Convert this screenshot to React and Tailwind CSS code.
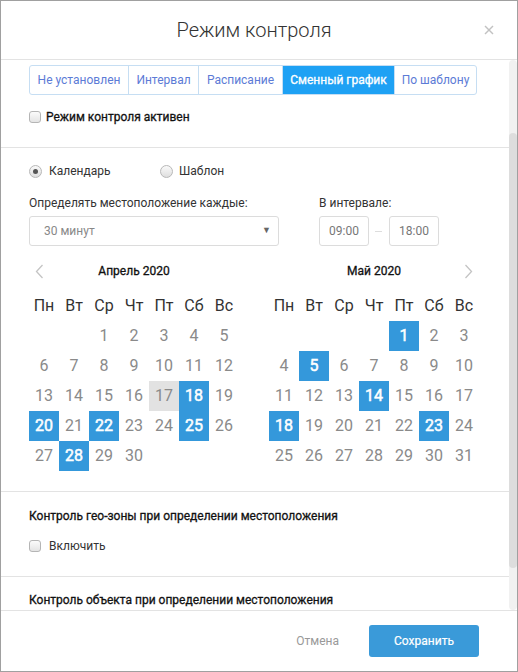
import React from "react";

const tabs = [
  { label: "Не установлен", w: "w-[98px]" },
  { label: "Интервал", w: "w-[70px]" },
  { label: "Расписание", w: "w-[84px]" },
  { label: "Сменный график", w: "w-[112px]", active: true },
  { label: "По шаблону", w: "w-[82px]" },
];

const weekdays = ["Пн", "Вт", "Ср", "Чт", "Пт", "Сб", "Вс"];

function Checkbox() {
  return (
    <span className="w-[12px] h-[12px] rounded-[3px] border border-[#b5b5b5] bg-gradient-to-b from-[#fbfbfb] to-[#e4e4e4] shrink-0" />
  );
}

function Radio({ checked }) {
  return (
    <span className="w-[13px] h-[13px] rounded-full border border-[#b8b8b8] bg-gradient-to-b from-[#fafafa] to-[#dedede] flex items-center justify-center shrink-0">
      {checked && <span className="w-[5px] h-[5px] rounded-full bg-[#555]" />}
    </span>
  );
}

function Chevron({ dir }) {
  return (
    <svg width="9" height="15" viewBox="0 0 9 15" className="shrink-0">
      {dir === "left" ? (
        <polyline points="7.5,1 1.5,7.5 7.5,14" fill="none" stroke="#c4c4c4" strokeWidth="1.3" />
      ) : (
        <polyline points="1.5,1 7.5,7.5 1.5,14" fill="none" stroke="#c4c4c4" strokeWidth="1.3" />
      )}
    </svg>
  );
}

function Month({ title, offset, days, marked, today, nav }) {
  const cells = [];
  for (let i = 0; i < offset; i++) cells.push(null);
  for (let d = 1; d <= days; d++) cells.push(d);
  return (
    <div className="w-[210px] flex flex-col">
      <div className="h-[20px] flex items-center justify-between">
        <div className="w-[20px] flex justify-center">{nav === "left" && <Chevron dir="left" />}</div>
        <div className="text-[12px] text-[#111] leading-[16px] [-webkit-text-stroke:0.3px_#111]">{title}</div>
        <div className="w-[20px] flex justify-center">{nav === "right" && <Chevron dir="right" />}</div>
      </div>
      <div className="grid grid-cols-7 mt-[10px]">
        {weekdays.map((w) => (
          <div key={w} className="h-[30px] flex items-center justify-center text-[16px] text-[#333]">
            {w}
          </div>
        ))}
        {cells.map((d, i) => {
          const isMarked = d && marked.includes(d);
          const isToday = d === today;
          return (
            <div
              key={i}
              className={
                "h-[30px] flex items-center justify-center text-[16px] " +
                (isMarked
                  ? "bg-[#3498db] text-white [-webkit-text-stroke:0.5px_#fff]"
                  : isToday
                  ? "bg-[#e2e2e2] text-[#8a8a8a]"
                  : "text-[#8a8a8a]")
              }
            >
              {d || ""}
            </div>
          );
        })}
      </div>
    </div>
  );
}

export default function App() {
  return (
    <div className="w-[518px] h-[672px] border border-[#a0a0a0] bg-white flex flex-col font-[Roboto,sans-serif] overflow-hidden">
      {/* Header */}
      <div className="h-[59px] shrink-0 border-b border-[#e3e3e3] relative flex items-center justify-center pr-[10px]">
        <div className="text-[20px] font-light text-[#333] leading-[26px]">Режим контроля</div>
        <svg width="10" height="10" viewBox="0 0 10 10" className="absolute right-[23px] top-[24px]">
          <line x1="1" y1="1" x2="9" y2="9" stroke="#c2c2c2" strokeWidth="1.4" />
          <line x1="9" y1="1" x2="1" y2="9" stroke="#c2c2c2" strokeWidth="1.4" />
        </svg>
      </div>

      {/* Body */}
      <div className="h-[550px] shrink-0 flex">
        <div className="flex-1 overflow-hidden flex flex-col">
          {/* Section 1 */}
          <div className="h-[88px] shrink-0 border-b border-[#e3e3e3] pl-[28px] pt-[5px]">
            <div className="flex h-[30px] border border-[#c6def3] rounded-[3px] w-fit overflow-hidden">
              {tabs.map((t, i) => (
                <div
                  key={t.label}
                  className={
                    t.w +
                    " h-full flex items-center justify-center text-[12px] " +
                    (i > 0 ? "border-l border-[#c6def3] " : "") +
                    (t.active ? "bg-[#1ea1f4] text-white [-webkit-text-stroke:0.3px_#fff]" : "text-[#5c7bd6]")
                  }
                >
                  {t.label}
                </div>
              ))}
            </div>
            <div className="mt-[15px] h-[14px] flex items-center gap-[5px]">
              <Checkbox />
              <span className="text-[12px] text-[#111] leading-[14px] [-webkit-text-stroke:0.3px_#111]">Режим контроля активен</span>
            </div>
          </div>

          {/* Section 2 */}
          <div className="h-[344px] shrink-0 border-b border-[#e3e3e3] pl-[28px] pt-[15px]">
            <div className="h-[16px] flex items-center">
              <div className="flex items-center gap-[7px] w-[131px]">
                <Radio checked />
                <span className="text-[12px] text-[#333]">Календарь</span>
              </div>
              <div className="flex items-center gap-[6px]">
                <Radio />
                <span className="text-[12px] text-[#333]">Шаблон</span>
              </div>
            </div>
            <div className="flex mt-[17px] gap-[40px]">
              <div className="w-[250px] flex flex-col">
                <div className="text-[12px] text-[#333] leading-[15px]">Определять местоположение каждые:</div>
                <div className="mt-[5px] h-[30px] border border-[#dcdcdc] rounded-[3px] flex items-center justify-between pl-[14px] pr-[7px]">
                  <span className="text-[12px] text-[#888]">30 минут</span>
                  <span className="text-[9px] text-[#666]">▼</span>
                </div>
              </div>
              <div className="flex flex-col">
                <div className="text-[12px] text-[#333] leading-[15px]">В интервале:</div>
                <div className="mt-[5px] flex items-center">
                  <div className="w-[50px] h-[30px] border border-[#dcdcdc] rounded-[3px] flex items-center justify-center text-[12px] text-[#777]">
                    09:00
                  </div>
                  <div className="w-[7px] h-px bg-[#ddd] ml-[6px] mr-[7px]" />
                  <div className="w-[50px] h-[30px] border border-[#dcdcdc] rounded-[3px] flex items-center justify-center text-[12px] text-[#777]">
                    18:00
                  </div>
                </div>
              </div>
            </div>
            <div className="flex gap-[30px] mt-[15px]">
              <Month title="Апрель 2020" offset={2} days={30} marked={[18, 20, 22, 25, 28]} today={17} nav="left" />
              <Month title="Май 2020" offset={4} days={31} marked={[1, 5, 14, 18, 23]} nav="right" />
            </div>
          </div>

          {/* Section 3 */}
          <div className="h-[85px] shrink-0 border-b border-[#e3e3e3] pl-[28px] pt-[16px]">
            <div className="text-[12px] text-[#111] leading-[16px] [-webkit-text-stroke:0.3px_#111]">
              Контроль гео-зоны при определении местоположения
            </div>
            <div className="mt-[14px] h-[16px] flex items-center gap-[8px]">
              <Checkbox />
              <span className="text-[12px] text-[#333]">Включить</span>
            </div>
          </div>

          {/* Section 4 */}
          <div className="pl-[28px] pt-[15px]">
            <div className="text-[12px] text-[#111] leading-[16px] [-webkit-text-stroke:0.3px_#111]">
              Контроль объекта при определении местоположения
            </div>
          </div>
        </div>
        {/* Scrollbar */}
        <div className="w-[8px] shrink-0 bg-[#f1f1f1] rounded-[4px] flex flex-col">
          <div className="mt-[73px] h-[435px] rounded-[4px] bg-[#dddddd]" />
        </div>
      </div>

      {/* Footer */}
      <div className="flex-1 border-t border-[#e3e3e3] flex items-center justify-end pr-[38px] gap-[30px]">
        <span className="text-[12px] text-[#999]">Отмена</span>
        <div className="w-[110px] h-[32px] rounded-[3px] bg-[#3a9ad9] flex items-center justify-center text-[12px] text-white [-webkit-text-stroke:0.2px_#fff]">
          Сохранить
        </div>
      </div>
    </div>
  );
}
